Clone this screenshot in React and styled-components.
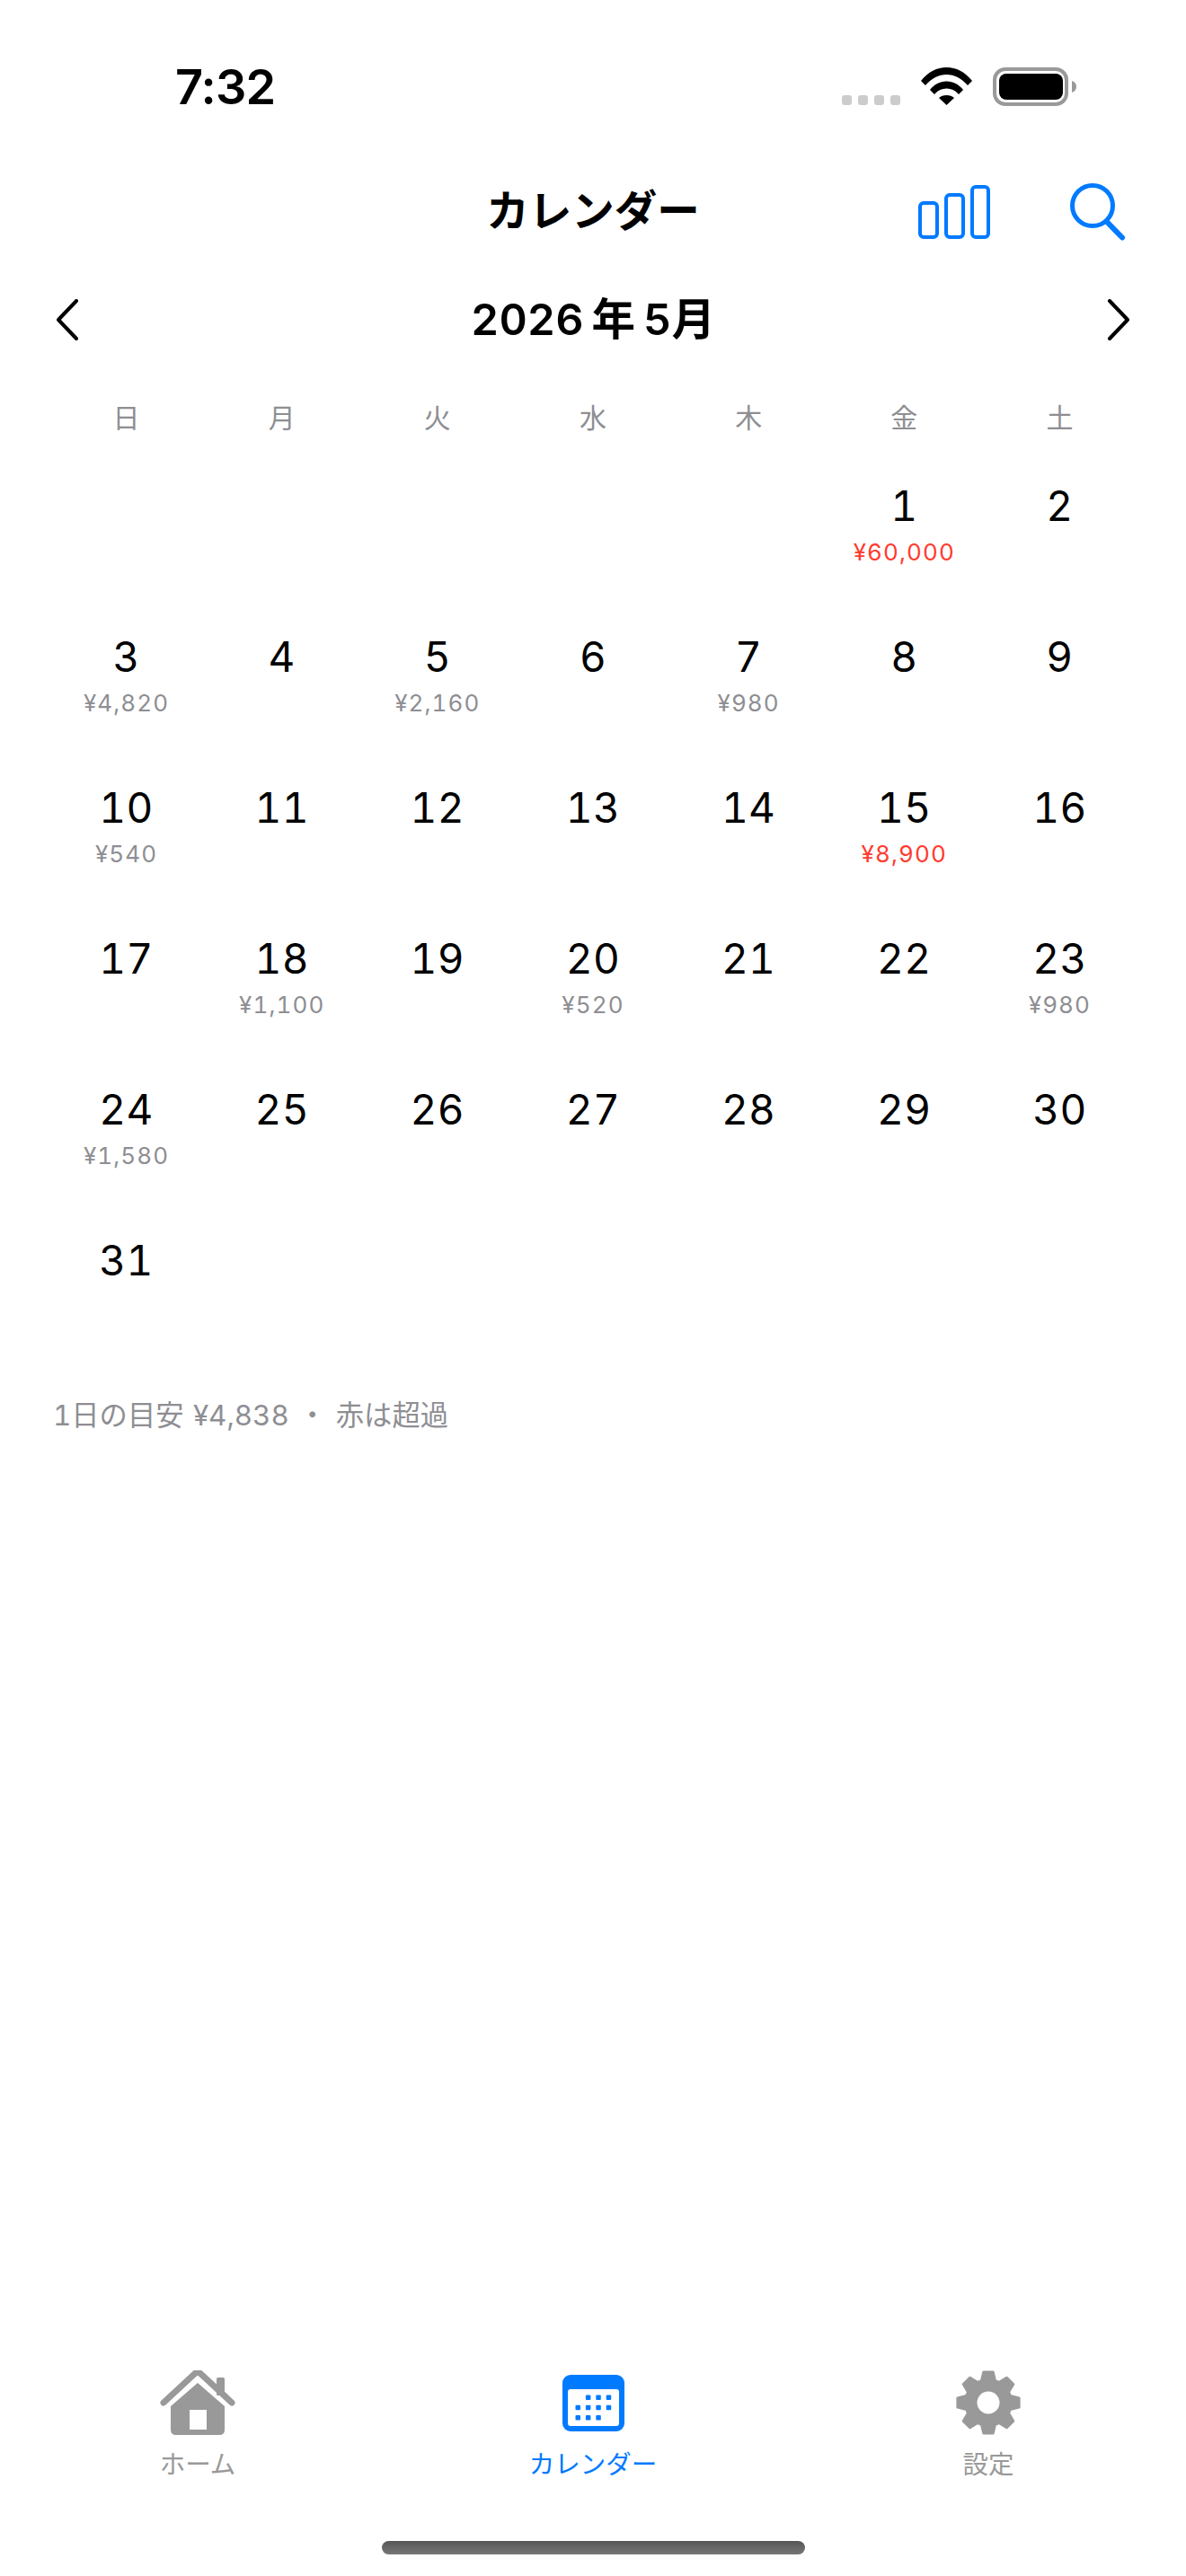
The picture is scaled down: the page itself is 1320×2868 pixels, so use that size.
import React from "react";
import styled, { createGlobalStyle } from "styled-components";

const Global = createGlobalStyle`
  html, body { margin: 0; padding: 0; background: #fff; }
  * { box-sizing: border-box; }
`;
const FONT = `Inter, "Noto Sans CJK JP", sans-serif`;
const BLUE = "#007aff";
const GRAY = "#8e8e93";

const Page = styled.div`
  width: 1320px; height: 2868px; display: flex; flex-direction: column;
  font-family: ${FONT}; color: #000; background: #fff; overflow: hidden;
`;
const StatusBar = styled.header`
  height: 180px; flex: none; padding: 75px 122px 0 195px;
  display: flex; justify-content: space-between; align-items: flex-start;
`;
const Time = styled.div`
  font-size: 54px; line-height: 44px; font-weight: 600; letter-spacing: -0.8px;
`;
const StatusIcons = styled.div`display: flex; align-items: flex-start; gap: 23px;`;
const Signal = styled.div`display: flex; gap: 7px; margin-top: 31px;`;
const SignalDot = styled.span`width: 11px; height: 11px; border-radius: 3px; background: #ccc;`;
const NavBar = styled.nav`
  height: 106px; flex: none; display: grid; grid-template-columns: 1fr auto 1fr; align-items: center;
`;
const Title = styled.h1`
  margin: 3px 0 0; font-size: 47.5px; font-weight: 700; line-height: 60px; color: #000;
`;
const NavActions = styled.div`
  display: flex; justify-content: flex-end; align-items: center; gap: 89px; padding: 5px 67px 0 0;
`;
const MonthRow = styled.div`
  height: 140px; flex: none; padding: 0 62px; display: flex; justify-content: space-between; align-items: center;
`;
const Month = styled.div`
  font-size: 48.5px; font-weight: 600; line-height: 60px; word-spacing: -4px;
  font-variant-numeric: tabular-nums;
`;
const Weekdays = styled.div`
  height: 78px; flex: none; margin: 0 54px; display: grid; grid-template-columns: repeat(7, 1fr); align-items: center;
`;
const Weekday = styled.div`font-size: 30px; color: ${GRAY}; text-align: center; line-height: 40px;`;
const Grid = styled.div`
  flex: none; margin: 0 54px; display: grid; grid-template-columns: repeat(7, 1fr); grid-auto-rows: 168px;
`;
const Cell = styled.div`
  padding-top: 32px; display: flex; flex-direction: column; align-items: center;
`;
const DayNum = styled.div`
  font-size: 46px; line-height: 54px; font-weight: 400; color: #000;
  font-variant-numeric: tabular-nums; letter-spacing: 0.4px;
`;
const Amount = styled.div`
  margin-top: 9px; font-size: 26px; line-height: 32px; letter-spacing: 1.1px;
  font-variant-numeric: tabular-nums;
  color: ${p => (p.$over ? "#ff3b30" : GRAY)};
`;
const Note = styled.p`
  flex: 1; margin: 42px 0 0; padding-left: 59px; font-size: 31.3px; line-height: 44px; color: ${GRAY};
  font-variant-numeric: tabular-nums; word-spacing: 2px;
`;
const TabBar = styled.footer`flex: none; display: grid; grid-template-columns: repeat(3, 1fr);`;
const Tab = styled.div`
  display: flex; flex-direction: column; align-items: center;
  color: ${p => (p.$active ? BLUE : "#999")};
`;
const TabIcon = styled.div`height: 72px; display: flex; align-items: center; justify-content: center;`;
const TabLabel = styled.span`margin-top: 17px; font-size: 28.5px; line-height: 32px;`;
const Indicator = styled.div`
  flex: none; width: 471px; height: 15px; margin: 69px auto 24px; border-radius: 8px;
  background: linear-gradient(#555, #777);
`;

const gearPath = (() => {
  const cx = 36, cy = 36, R = 34.5, r = 25.5;
  const parts = [];
  for (let i = 0; i < 8; i++) {
    const a = (i * Math.PI) / 4 - Math.PI / 2;
    const pts = [[r, a - 0.3], [R, a - 0.15], [R, a + 0.15], [r, a + 0.3]];
    pts.forEach(([rad, t], j) => {
      const x = (cx + rad * Math.cos(t)).toFixed(2);
      const y = (cy + rad * Math.sin(t)).toFixed(2);
      parts.push(`${i === 0 && j === 0 ? "M" : "L"}${x} ${y}`);
    });
  }
  return parts.join(" ") + " Z";
})();

const Wifi = () => (
  <svg width="57" height="42" viewBox="0 0 57 42" fill="#000">
    <path d="M0 15 C8 5 18 0 28.5 0 C39 0 49 5 57 15 L52 20 C45 12 37 8 28.5 8 C20 8 12 12 5 20 Z" />
    <path d="M10 25 C15 19 21 15.5 28.5 15.5 C36 15.5 42 19 47 25 L42 30 C38 25.5 33.5 23.5 28.5 23.5 C23.5 23.5 19 25.5 15 30 Z" />
    <path d="M20 34 C22 32 25 31 28.5 31 C32 31 35 32 37 34 L28.5 42 Z" />
  </svg>
);
const Battery = () => (
  <svg width="93" height="43" viewBox="0 0 93 43">
    <rect x="2" y="2" width="80" height="39" rx="12" fill="none" stroke="#999" strokeWidth="4" />
    <rect x="7" y="7" width="71" height="29" rx="8" fill="#000" />
    <path d="M88 15 C91 16 93 18 93 21.5 C93 25 91 27 88 28 Z" fill="#999" />
  </svg>
);
const Bars = () => (
  <svg width="80" height="60" viewBox="0 0 80 60" fill="none" stroke={BLUE} strokeWidth="4">
    <rect x="2" y="20" width="19" height="38" rx="4" />
    <rect x="31" y="11" width="19" height="47" rx="4" />
    <rect x="60" y="2" width="18" height="56" rx="4" />
  </svg>
);
const Search = () => (
  <svg width="62" height="64" viewBox="0 0 62 64" fill="none" stroke={BLUE} strokeWidth="5" strokeLinecap="round">
    <circle cx="25" cy="25" r="22.5" />
    <path d="M41 43 L58 60.5" strokeWidth="6" />
  </svg>
);
const Chevron = ({ dir }) => (
  <svg width="26" height="46" viewBox="0 0 26 46" fill="none" stroke="#000" strokeWidth="4" strokeLinecap="round" strokeLinejoin="round">
    <path d={dir === "left" ? "M23 2 L3 23 L23 44" : "M3 2 L23 23 L3 44"} />
  </svg>
);
const Home = () => (
  <svg width="84" height="72" viewBox="0 0 84 72" fill="#999">
    <path d="M4 36 L39 3.5 Q42 1 45 3.5 L80 36" fill="none" stroke="#999" strokeWidth="7" strokeLinecap="round" strokeLinejoin="round" />
    <rect x="63" y="8" width="9" height="20" rx="1.5" />
    <path fillRule="evenodd" d="M42 14 L72 40 V66 Q72 72 66 72 H18 Q12 72 12 66 V40 Z M33 44 V66 H52 V44 Z" />
  </svg>
);
const Calendar = () => (
  <svg width="69" height="63" viewBox="0 0 69 63" fill={BLUE}>
    <rect width="69" height="63" rx="9" />
    <rect x="6" y="16" width="57" height="41" rx="3" fill="#fff" />
    {[[1,0],[2,0],[3,0],[0,1],[1,1],[2,1],[3,1],[0,2],[1,2],[2,2]].map(([c, r]) => (
      <rect key={`${c}-${r}`} x={14.5 + c * 11.4} y={22.5 + r * 11.3} width="5.5" height="5.5" rx="1" />
    ))}
  </svg>
);
const Gear = () => (
  <svg width="72" height="72" viewBox="0 0 72 72">
    <path fillRule="evenodd" d={gearPath} fill="#999" stroke="#999" strokeWidth="3" strokeLinejoin="round" />
    <circle cx="36" cy="36" r="12.5" fill="#fff" />
  </svg>
);

const WEEK = ["日", "月", "火", "水", "木", "金", "土"];
const AMOUNTS = {
  1: ["¥60,000", true], 3: ["¥4,820"], 5: ["¥2,160"], 7: ["¥980"], 10: ["¥540"], 15: ["¥8,900", true],
  18: ["¥1,100"], 20: ["¥520"], 23: ["¥980"], 24: ["¥1,580"],
};
const cells = [...Array(5).fill(null), ...Array.from({ length: 31 }, (_, i) => i + 1)];

export default function App() {
  return (
    <Page>
      <Global />
      <StatusBar>
        <Time>7:32</Time>
        <StatusIcons>
          <Signal>{[0, 1, 2, 3].map(i => <SignalDot key={i} />)}</Signal>
          <Wifi />
          <Battery />
        </StatusIcons>
      </StatusBar>
      <NavBar>
        <span />
        <Title>カレンダー</Title>
        <NavActions><Bars /><Search /></NavActions>
      </NavBar>
      <MonthRow>
        <Chevron dir="left" />
        <Month>2026 年 5月</Month>
        <Chevron dir="right" />
      </MonthRow>
      <Weekdays>{WEEK.map(d => <Weekday key={d}>{d}</Weekday>)}</Weekdays>
      <Grid>
        {cells.map((d, i) => (
          <Cell key={i}>
            {d && <DayNum>{d}</DayNum>}
            {d && AMOUNTS[d] && <Amount $over={AMOUNTS[d][1]}>{AMOUNTS[d][0]}</Amount>}
          </Cell>
        ))}
      </Grid>
      <Note>1日の目安 ¥4,838 ・ 赤は超過</Note>
      <TabBar>
        <Tab><TabIcon><Home /></TabIcon><TabLabel>ホーム</TabLabel></Tab>
        <Tab $active><TabIcon><Calendar /></TabIcon><TabLabel>カレンダー</TabLabel></Tab>
        <Tab><TabIcon><Gear /></TabIcon><TabLabel>設定</TabLabel></Tab>
      </TabBar>
      <Indicator />
    </Page>
  );
}
